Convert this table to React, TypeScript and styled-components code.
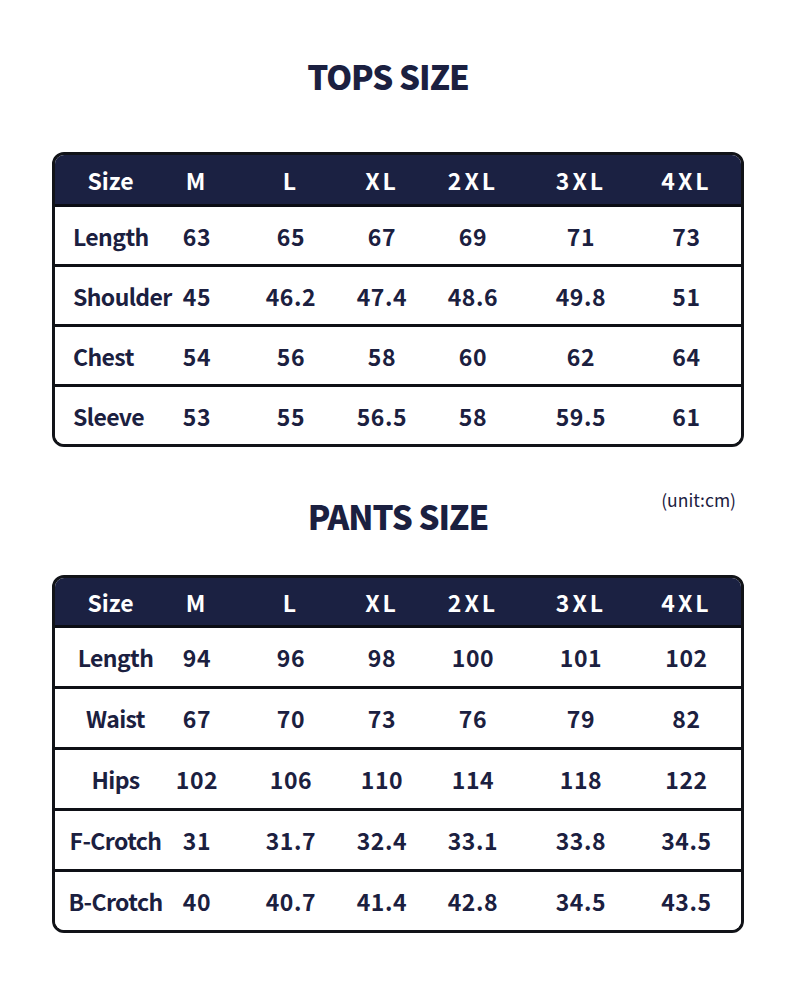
import React from 'react';
import styled, { createGlobalStyle } from 'styled-components';

const GlobalStyle = createGlobalStyle`
  html, body {
    margin: 0;
    padding: 0;
    background: #ffffff;
  }
  body {
    font-family: "Noto Sans CJK SC", "Noto Sans", sans-serif;
    color: #1b2040;
  }
`;

const NAVY = '#1b2142';
const INK = '#1b2040';

// column widths inside the 3px border (686px in total)
const COLUMNS = '105px 74px 114px 68px 114px 102px 109px';

const Page = styled.div`
  width: 790px;
  height: 1005px;
  box-sizing: border-box;
  padding: 54px 46px 0 52px;
  display: flex;
  flex-direction: column;
`;

const TitleRow = styled.div<{ $gap: number; $after: number; $shift?: number }>`
  display: grid;
  grid-template-columns: 1fr auto 1fr;
  align-items: start;
  height: 44px;
  margin-top: ${(p) => p.$gap}px;
  margin-bottom: ${(p) => p.$after}px;
  padding-right: ${(p) => p.$shift ?? 0}px;
`;

const Title = styled.h2`
  grid-column: 2;
  margin: 0;
  font-family: "Noto Sans CJK SC", "Noto Sans", sans-serif;
  font-weight: 900;
  font-size: 33px;
  line-height: 44px;
  letter-spacing: -1px;
  color: ${INK};
`;

const Unit = styled.span`
  grid-column: 3;
  justify-self: end;
  margin-right: 8px;
  margin-top: -7px;
  font-family: "Noto Sans CJK SC", "Noto Sans", sans-serif;
  font-size: 17.5px;
  color: ${INK};
`;

const Table = styled.div`
  width: 692px;
  box-sizing: border-box;
  border: 3px solid #111318;
  border-radius: 12px;
  overflow: hidden;
`;

const HeadRow = styled.div<{ $h: number }>`
  display: grid;
  grid-template-columns: ${COLUMNS};
  height: ${(p) => p.$h}px;
  background: ${NAVY};
  border-bottom: 3px solid #0b0d14;
`;

const Row = styled.div<{ $h: number }>`
  display: grid;
  grid-template-columns: ${COLUMNS};
  box-sizing: border-box;
  height: ${(p) => p.$h}px;
  background: #ffffff;
  & + & {
    border-top: 3px solid #0e1016;
  }
`;

const HeadCell = styled.div<{ $first?: boolean }>`
  display: flex;
  align-items: center;
  justify-content: center;
  padding-left: ${(p) => (p.$first ? '6px' : '0')};
  font-weight: 700;
  font-size: 23px;
  letter-spacing: ${(p) => (p.$first ? '0' : '3px')};
  color: #ffffff;
  white-space: nowrap;
`;

const Label = styled.div<{ $center?: boolean }>`
  display: flex;
  align-items: center;
  justify-content: ${(p) => (p.$center ? 'center' : 'flex-start')};
  padding-left: ${(p) => (p.$center ? '16px' : '18px')};
  font-weight: 700;
  font-size: 23px;
  letter-spacing: -0.6px;
  color: ${INK};
  white-space: nowrap;
`;

const Cell = styled.div`
  display: flex;
  align-items: center;
  justify-content: center;
  font-weight: 700;
  font-size: 23px;
  letter-spacing: 0.6px;
  color: ${INK};
  white-space: nowrap;
`;

const SIZES = ['M', 'L', 'XL', '2XL', '3XL', '4XL'];

const tops: [string, string[]][] = [
  ['Length', ['63', '65', '67', '69', '71', '73']],
  ['Shoulder', ['45', '46.2', '47.4', '48.6', '49.8', '51']],
  ['Chest', ['54', '56', '58', '60', '62', '64']],
  ['Sleeve', ['53', '55', '56.5', '58', '59.5', '61']],
];

const pants: [string, string[]][] = [
  ['Length', ['94', '96', '98', '100', '101', '102']],
  ['Waist', ['67', '70', '73', '76', '79', '82']],
  ['Hips', ['102', '106', '110', '114', '118', '122']],
  ['F-Crotch', ['31', '31.7', '32.4', '33.1', '33.8', '34.5']],
  ['B-Crotch', ['40', '40.7', '41.4', '42.8', '34.5', '43.5']],
];

const SizeTable = ({
  rows,
  center,
  headH,
  rowH,
}: {
  rows: [string, string[]][];
  center?: boolean;
  headH: number;
  rowH: number;
}) => (
  <Table>
    <HeadRow $h={headH}>
      <HeadCell $first>Size</HeadCell>
      {SIZES.map((s) => (
        <HeadCell key={s}>{s}</HeadCell>
      ))}
    </HeadRow>
    {rows.map(([label, values], i) => (
      <Row key={label} $h={i === 0 ? rowH - 3 : rowH}>
        <Label $center={center}>{label}</Label>
        {values.map((v, j) => (
          <Cell key={j}>{v}</Cell>
        ))}
      </Row>
    ))}
  </Table>
);

export default function App() {
  return (
    <>
      <GlobalStyle />
      <Page>
        <TitleRow $gap={0} $after={54} $shift={20}>
          <Title>TOPS SIZE</Title>
        </TitleRow>
        <SizeTable rows={tops} headH={49} rowH={60} />
        <TitleRow $gap={47} $after={37}>
          <Title>PANTS SIZE</Title>
          <Unit>(unit:cm)</Unit>
        </TitleRow>
        <SizeTable rows={pants} center headH={47} rowH={61} />
      </Page>
    </>
  );
}
